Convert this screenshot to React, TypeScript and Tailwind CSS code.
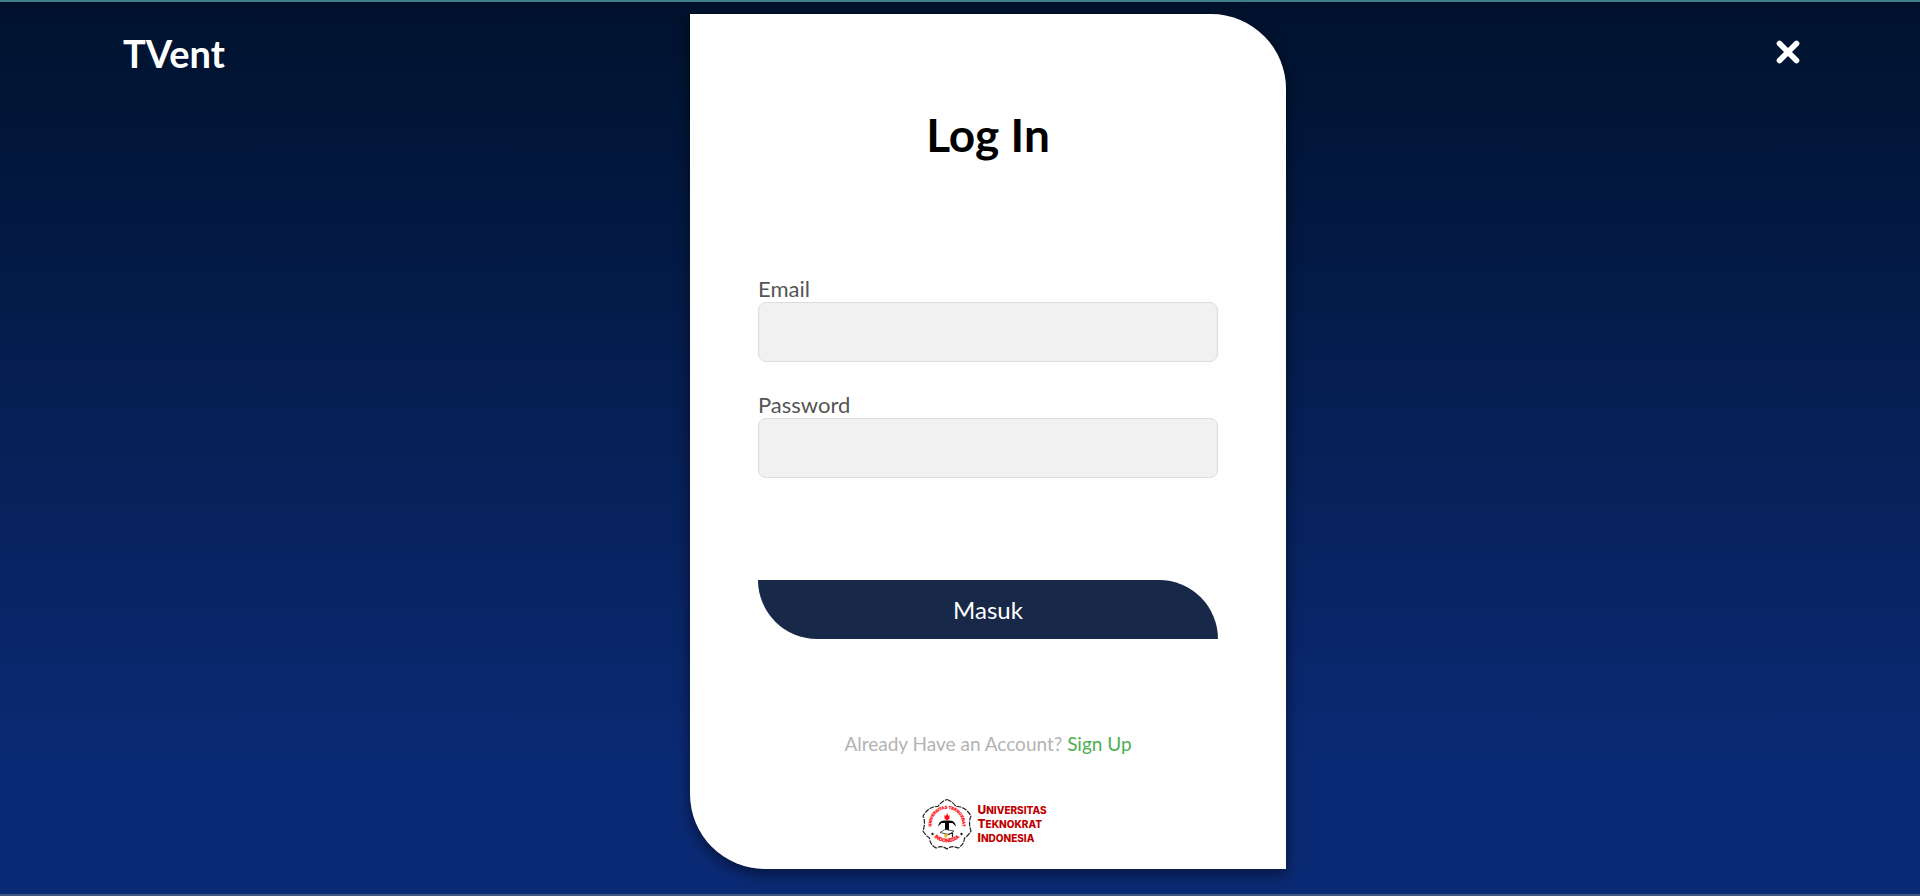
import { X } from "lucide-react";

function Emblem() {
  return (
    <svg viewBox="0 0 52 52" className="size-[52px] shrink-0" aria-hidden="true">
      <defs>
        <path id="arc-top" d="M13.2 35 A15.5 15.5 0 1 1 38.8 35" />
        <path id="arc-bottom" d="M9.5 34 A18.5 18.5 0 0 0 42.5 34" />
      </defs>
      <path
        d="M26 1.5 Q31 3 35 8.5 Q44 8 50 18 Q47 24 50 33 Q47 38 43.5 40 Q43 47 37 50 Q31 47 26 51 Q21 47 15 50 Q9 47 8.5 40 Q5 38 2 33 Q5 24 2 18 Q8 8 17 8.5 Q21 3 26 1.5 Z"
        fill="none"
        stroke="#222"
        strokeWidth="1.2"
        strokeDasharray="5 1"
      />
      <g fill="#ff0a14" stroke="#ff0a14" strokeWidth=".3" fontFamily="Liberation Sans, sans-serif" fontWeight="700">
        <text textAnchor="middle" fontSize="4">
          <textPath href="#arc-top" startOffset="50%">
            UNIVERSITAS TEKNOKRAT
          </textPath>
        </text>
        <text textAnchor="middle" fontSize="5">
          <textPath href="#arc-bottom" startOffset="50%">
            INDONESIA
          </textPath>
        </text>
      </g>
      <path d="M17 28.5 Q18 22.5 23 22.5 H29 Q34 22.5 35 28.5 L31.5 25 H28 V33 H24 V25 H20.5 Z" fill="#000" />
      <path d="M23.5 17 L25 18 L26 15 L27.5 18 L28.5 17 V20.5 L26 22.5 L23.5 20.5 Z" fill="#ff0a14" />
      <path d="M19 34.5 L24 31.5 L33 33 L28 36.5 Z" fill="#fff" stroke="#333" strokeWidth=".8" />
      <path d="M23 36 L28 36.5 L24 40.5 Z" fill="#e8b818" />
      <path d="M27 36.5 L31.5 35 V39" fill="none" stroke="#222" strokeWidth="1.2" />
      <circle cx="11.5" cy="36" r="1.2" fill="#222" />
      <circle cx="40.5" cy="36" r="1.2" fill="#222" />
    </svg>
  );
}

function Wordmark() {
  return (
    <p className="flex flex-col font-['Inter',sans-serif] text-[10px] leading-[14px] font-extrabold text-[#c00000] uppercase">
      <span className="first-letter:text-[12px] inline-block">Universitas</span>
      <span className="first-letter:text-[12px] inline-block">Teknokrat</span>
      <span className="first-letter:text-[12px] inline-block">Indonesia</span>
    </p>
  );
}

function Field({ id, label, type }: { id: string; label: string; type: string }) {
  return (
    <div className="flex flex-col">
      <label htmlFor={id} className="text-[22px] leading-[26px] text-[#555]">
        {label}
      </label>
      <input
        id={id}
        type={type}
        className="h-[60px] w-full rounded-lg border border-[#ddd] bg-[#f1f1f1] px-4 text-[20px] text-[#333] outline-none"
      />
    </div>
  );
}

export default function App() {
  return (
    <div className="grid min-h-screen grid-cols-[690fr_596fr_634fr] items-start border-y-2 border-t-[#3f7f88] border-b-[#3c5480] bg-[linear-gradient(180deg,#00122d,#0b2a75_85%)] bg-origin-border pt-3 font-['Lato',sans-serif]">
      <header className="pt-[17px] pl-[123px]">
        <a href="#" className="text-[38px] leading-[44px] font-bold text-white">
          TVent
        </a>
      </header>

      <main className="flex flex-col items-center rounded-tr-[75px] rounded-bl-[75px] bg-white px-[68px] pt-[95px] pb-[19px] shadow-[0_5px_15px_rgba(0,0,0,0.5)]">
        <h1 className="text-[46px] leading-[52px] font-bold text-black">Log In</h1>
        <form className="mt-[115px] flex w-full flex-col" onSubmit={(e) => e.preventDefault()}>
          <div className="flex flex-col gap-[30px]">
            <Field id="email" label="Email" type="email" />
            <Field id="password" label="Password" type="password" />
          </div>
          <button
            type="submit"
            className="mt-[102px] h-[59px] w-full rounded-tr-[60px] rounded-bl-[60px] bg-[#182848] text-[24px] text-white"
          >
            Masuk
          </button>
        </form>
        <p className="mt-[93px] text-[19px] leading-[24px] text-[#b3b3b3]">
          Already Have an Account?{" "}
          <a href="#" className="text-[#4caf50]">
            Sign Up
          </a>
        </p>
        <div className="mt-[42px] mr-[8px] flex items-center gap-1">
          <Emblem />
          <Wordmark />
        </div>
      </main>

      <div className="flex justify-end pt-[21px] pr-[115px]">
        <button type="button" aria-label="Close" className="text-white">
          <X size={34} strokeWidth={4} />
        </button>
      </div>
    </div>
  );
}
